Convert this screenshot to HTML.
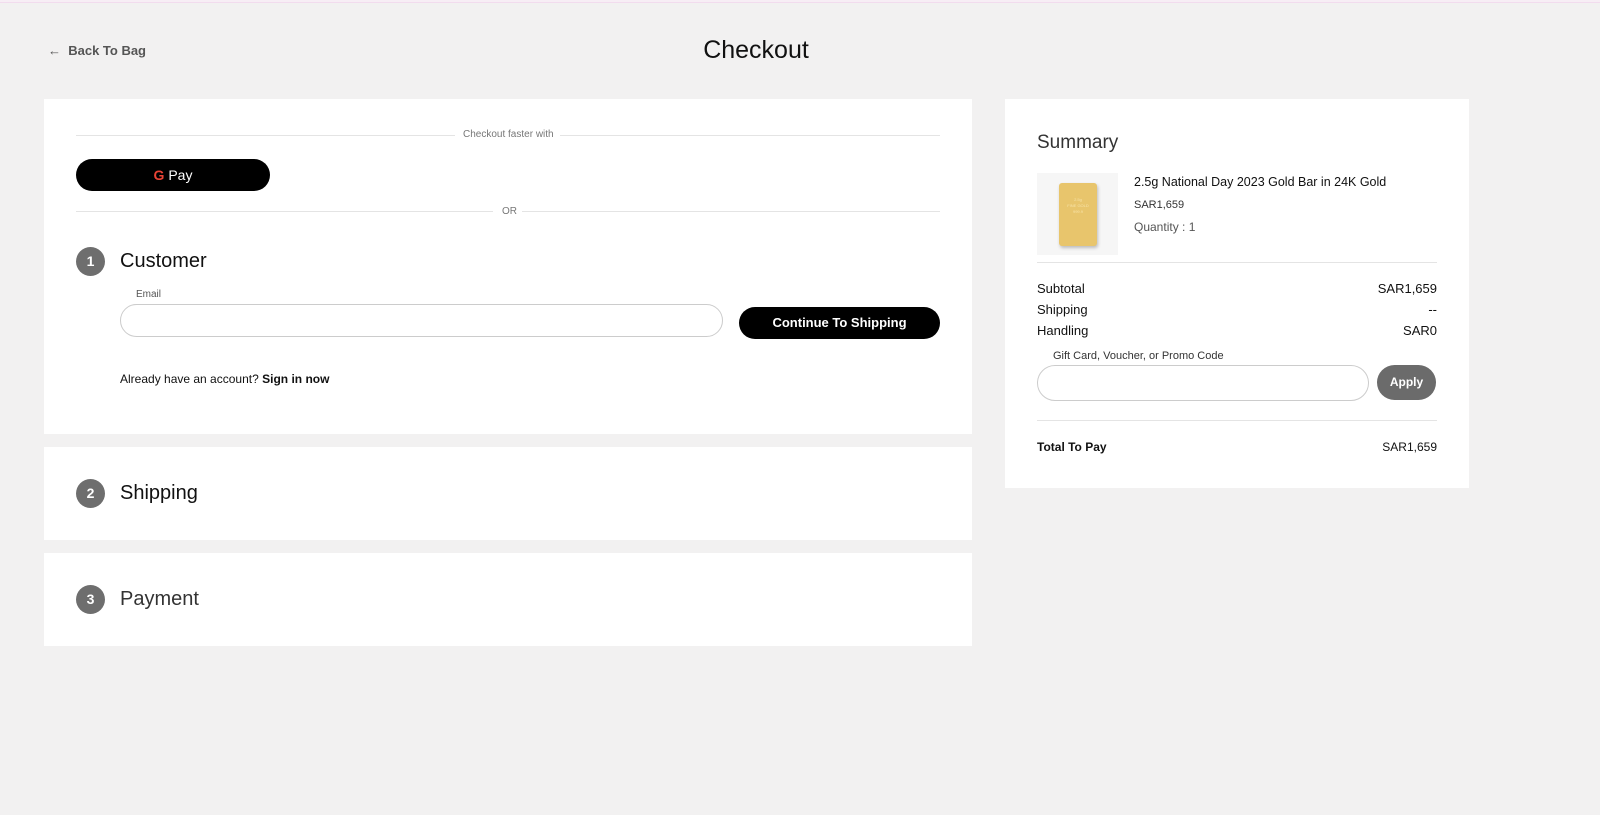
<!DOCTYPE html>
<html><head><meta charset="utf-8"><style>
*{box-sizing:border-box;margin:0;padding:0}
body{width:1600px;height:815px;background:#f2f1f1;font-family:"Liberation Sans",Arial,sans-serif;color:#111;position:relative;overflow:hidden}
.top{position:absolute;left:0;top:0;width:1600px;height:3px;background:#f7eef5;border-bottom:1px solid #f2dcee}
.abs{position:absolute}
.card{position:absolute;background:#fff}
.line{position:absolute;height:1px;background:#e4e4e4}
.small{font-size:10px;color:#777}
.num{position:absolute;width:29px;height:29px;border-radius:50%;background:#6e6e6e;color:#fff;font-weight:bold;font-size:14px;text-align:center;line-height:29px}
.h{position:absolute;font-size:20px;color:#111}
.row{position:absolute;left:1037px;width:400px;font-size:13px;display:flex;justify-content:space-between}
</style></head><body>
<div class="top"></div>
<div class="abs" style="left:48px;top:43px;font-size:13px;font-weight:bold;color:#555">&#8592;&nbsp; Back To Bag</div>
<div class="abs" style="left:0;width:1512px;text-align:center;top:36px;font-size:25px;color:#111">Checkout</div>

<div class="card" style="left:44px;top:99px;width:928px;height:335px"></div>
<div class="line" style="left:76px;top:135px;width:379px"></div>
<div class="abs small" style="left:463px;top:129px;font-size:10px">Checkout faster with</div>
<div class="line" style="left:560px;top:135px;width:380px"></div>
<div class="abs" style="left:76px;top:159px;width:194px;height:32px;background:#000;border-radius:16px;color:#fff;text-align:center;line-height:32px;font-size:14px"><span style="font-weight:bold;color:#ea4335">G</span> Pay</div>
<div class="line" style="left:76px;top:211px;width:417px"></div>
<div class="abs small" style="left:502px;top:206px">OR</div>
<div class="line" style="left:522px;top:211px;width:418px"></div>
<div class="num" style="left:76px;top:247px">1</div>
<div class="h" style="left:120px;top:250px">Customer</div>
<div class="abs small" style="left:136px;top:289px;color:#555">Email</div>
<div class="abs" style="left:120px;top:304px;width:603px;height:33px;border:1px solid #ccc;border-radius:17px"></div>
<div class="abs" style="left:739px;top:307px;width:201px;height:32px;background:#000;border-radius:16px;color:#fff;font-weight:bold;font-size:13px;text-align:center;line-height:32px">Continue To Shipping</div>
<div class="abs" style="left:120px;top:372px;font-size:12px">Already have an account? <b>Sign in now</b></div>

<div class="card" style="left:44px;top:447px;width:928px;height:93px"></div>
<div class="num" style="left:76px;top:479px">2</div>
<div class="h" style="left:120px;top:482px">Shipping</div>
<div class="card" style="left:44px;top:553px;width:928px;height:93px"></div>
<div class="num" style="left:76px;top:585px">3</div>
<div class="h" style="left:120px;top:588px;color:#333">Payment</div>

<div class="card" style="left:1005px;top:99px;width:464px;height:389px"></div>
<div class="abs" style="left:1037px;top:132px;font-size:19px;color:#333">Summary</div>
<div class="abs" style="left:1037px;top:173px;width:81px;height:82px;background:#f6f6f6"></div>
<div class="abs" style="left:1059px;top:183px;width:38px;height:63px;background:#e8c56c;border-radius:3px;box-shadow:1px 2px 3px #bbb;color:#f7e3a8;font-size:4px;text-align:center;padding-top:14px;line-height:6px">2.5g<br>FINE GOLD<br>999.9</div>
<div class="abs" style="left:1134px;top:175px;font-size:12.5px">2.5g National Day 2023 Gold Bar in 24K Gold</div>
<div class="abs" style="left:1134px;top:199px;font-size:11px;color:#333">SAR1,659</div>
<div class="abs" style="left:1134px;top:220px;font-size:12px;color:#555">Quantity : 1</div>
<div class="line" style="left:1037px;top:262px;width:400px"></div>
<div class="row" style="top:281px"><span>Subtotal</span><span>SAR1,659</span></div>
<div class="row" style="top:302px"><span>Shipping</span><span>--</span></div>
<div class="row" style="top:323px"><span>Handling</span><span>SAR0</span></div>
<div class="abs" style="left:1053px;top:350px;font-size:11px;color:#333">Gift Card, Voucher, or Promo Code</div>
<div class="abs" style="left:1037px;top:365px;width:332px;height:36px;border:1px solid #ccc;border-radius:18px"></div>
<div class="abs" style="left:1377px;top:365px;width:59px;height:35px;background:#6b6b6b;border-radius:18px;color:#fff;font-weight:bold;font-size:12px;text-align:center;line-height:35px">Apply</div>
<div class="line" style="left:1037px;top:420px;width:400px"></div>
<div class="row" style="top:440px;font-size:12px"><span style="font-weight:bold">Total To Pay</span><span>SAR1,659</span></div>
</body></html>
